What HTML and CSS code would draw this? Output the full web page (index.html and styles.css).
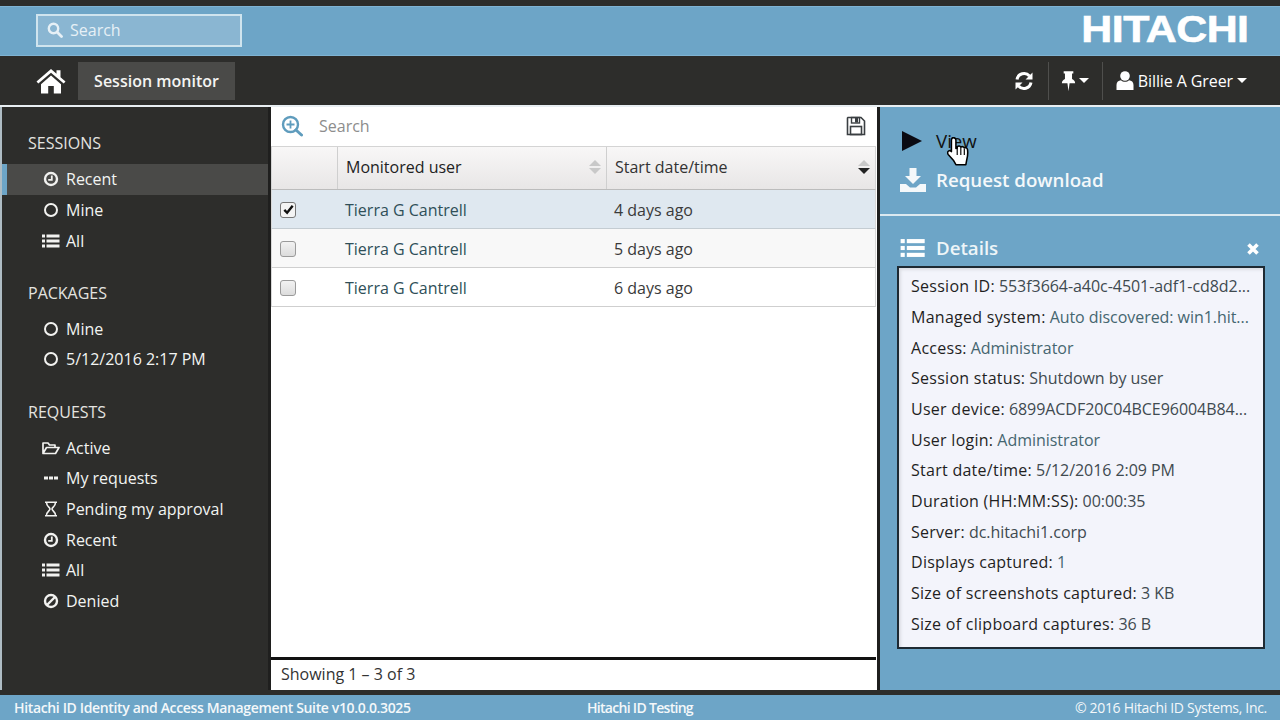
FILE: index.html
```html
<!DOCTYPE html>
<html lang="en">
<head>
<meta charset="utf-8">
<title>Session monitor</title>
<link rel="stylesheet" href="styles.css">
</head>
<body>
<svg class="defs" width="0" height="0" aria-hidden="true">
  <defs>
    <symbol id="i-clock" viewBox="0 0 16 16"><circle cx="8" cy="8" r="6" fill="none" stroke="currentColor" stroke-width="2.4"/><path d="M8.8 4.5v4.3H5.2" fill="none" stroke="currentColor" stroke-width="1.8"/></symbol>
    <symbol id="i-ring" viewBox="0 0 16 16"><circle cx="8" cy="8" r="6" fill="none" stroke="currentColor" stroke-width="2"/></symbol>
    <symbol id="i-list" viewBox="0 0 18 16"><g fill="currentColor"><rect x="0" y="1.5" width="3" height="3"/><rect x="0" y="6.5" width="3" height="3"/><rect x="0" y="11.5" width="3" height="3"/><rect x="4.5" y="1.5" width="13" height="3"/><rect x="4.5" y="6.5" width="13" height="3"/><rect x="4.5" y="11.5" width="13" height="3"/></g></symbol>
    <symbol id="i-folder" viewBox="0 0 18 16"><path d="M1 13.5V3h5l1.5 2H13v2.5M1 13.5h12.5L17 7.5H4.5L1 13.5z" fill="none" stroke="currentColor" stroke-width="1.7" stroke-linejoin="round"/></symbol>
    <symbol id="i-dots" viewBox="0 0 16 16"><g fill="currentColor"><rect x="1" y="6.5" width="4" height="3"/><rect x="6" y="6.5" width="4" height="3"/><rect x="11" y="6.5" width="4" height="3"/></g></symbol>
    <symbol id="i-hour" viewBox="0 0 16 16"><path d="M2 1.2h12M2 14.8h12M3.5 1.5c0 4 3.5 4.8 3.5 6.5S3.500 10.500 3.500 14.500M12.500 1.500c0 4-3.500 4.800-3.500 6.500s3.500 2.500 3.500 6.500" fill="none" stroke="currentColor" stroke-width="1.6"/></symbol>
    <symbol id="i-ban" viewBox="0 0 16 16"><circle cx="8" cy="8" r="6" fill="none" stroke="currentColor" stroke-width="2.4"/><path d="M4 12l8-8" stroke="currentColor" stroke-width="2.4"/></symbol>
  </defs>
</svg>
<div class="page">
  <header class="brand">
    <div class="global-search">
      <svg class="gs-icon" viewBox="0 0 16 16"><circle cx="6.500" cy="6.500" r="4.700" fill="none" stroke="currentColor" stroke-width="2.400"/><path d="M10 10l4.500 4.500" stroke="currentColor" stroke-width="2.800" stroke-linecap="round"/></svg>
      <span>Search</span>
    </div>
    <div class="logo">HITACHI</div>
  </header>
  <nav class="topnav">
    <svg class="home" viewBox="0 0 30 26"><path fill="currentColor" d="M15 1 0.500 13.500 2.300 15.600 15 4.700 27.700 15.600 29.500 13.500 24.500 9.200V2.300H20.500V5.700zM5 16.200V25.500H12.200V18H17.800V25.500H25V16.200L15 7.500z"/></svg>
    <div class="crumb">Session monitor</div>
    <div class="nav-right">
      <svg class="refresh" viewBox="0 0 20 20"><g fill="none" stroke="currentColor" stroke-width="3"><path d="M3 8.500A7.200 7.200 0 0 1 15.500 5"/><path d="M17 11.500A7.200 7.200 0 0 1 4.500 15"/></g><path fill="currentColor" d="M18.500 1.500V8.500H11.500zM1.500 18.500V11.500H8.500z"/></svg>
      <span class="sep"></span>
      <span class="pin-group">
        <svg class="pin" viewBox="0 0 14 20"><path fill="currentColor" d="M2.500 1H11.500V3H10.300V8.200C12 9 13.200 10.300 13.200 12H8L7 19.500 6 12H.800C.800 10.300 2 9 3.700 8.200V3H2.500z"/></svg>
        <span class="caret"></span>
      </span>
      <span class="sep"></span>
      <span class="user">
        <svg class="user-icon" viewBox="0 0 18 20"><circle cx="9" cy="5.500" r="4.800" fill="currentColor"/><path fill="currentColor" d="M.500 19.500V14.500C.500 11.500 2.500 10 5 9.800 6 10.800 7.500 11.300 9 11.300S12 10.800 13 9.800C15.500 10 17.500 11.500 17.500 14.500V19.500z"/></svg>
        <span class="user-name">Billie A Greer</span>
        <span class="caret"></span>
      </span>
    </div>
  </nav>
  <main class="body">
    <aside class="sidebar">
      <h2 class="side-head">SESSIONS</h2>
      <ul class="side-list">
        <li class="active"><svg class="si"><use href="#i-clock"/></svg>Recent</li>
        <li><svg class="si"><use href="#i-ring"/></svg>Mine</li>
        <li><svg class="si"><use href="#i-list"/></svg>All</li>
      </ul>
      <h2 class="side-head">PACKAGES</h2>
      <ul class="side-list">
        <li><svg class="si"><use href="#i-ring"/></svg>Mine</li>
        <li><svg class="si"><use href="#i-ring"/></svg>5/12/2016 2:17 PM</li>
      </ul>
      <h2 class="side-head">REQUESTS</h2>
      <ul class="side-list">
        <li><svg class="si"><use href="#i-folder"/></svg>Active</li>
        <li><svg class="si"><use href="#i-dots"/></svg>My requests</li>
        <li><svg class="si"><use href="#i-hour"/></svg>Pending my approval</li>
        <li><svg class="si"><use href="#i-clock"/></svg>Recent</li>
        <li><svg class="si"><use href="#i-list"/></svg>All</li>
        <li><svg class="si"><use href="#i-ban"/></svg>Denied</li>
      </ul>
    </aside>
    <section class="content">
      <div class="filter">
        <svg class="zoom-icon" viewBox="0 0 22 22"><circle cx="9.500" cy="9.500" r="7.500" fill="none" stroke="currentColor" stroke-width="2.400"/><path d="M15 15l5.500 5" stroke="currentColor" stroke-width="3" stroke-linecap="round"/><path d="M9.500 5.500v8M5.500 9.500h8" stroke="currentColor" stroke-width="1.800"/></svg>
        <span class="filter-text">Search</span>
        <svg class="save-icon" viewBox="0 0 20 20"><path d="M2 1.500H15L18.500 5V18.500H1.500V2z" fill="none" stroke="currentColor" stroke-width="1.600"/><rect x="5.500" y="1.500" width="8" height="5.500" fill="none" stroke="currentColor" stroke-width="1.400"/><rect x="9" y="2" width="3" height="4.500" fill="currentColor"/><rect x="4.500" y="10.500" width="11" height="8" fill="none" stroke="currentColor" stroke-width="1.600"/></svg>
      </div>
      <div class="grid">
        <div class="thead">
          <div class="th th-check"></div>
          <div class="th th-user">Monitored user<span class="sort"><i class="up"></i><i class="down"></i></span></div>
          <div class="th th-date">Start date/time<span class="sort"><i class="up"></i><i class="down on"></i></span></div>
        </div>
        <div class="row selected">
          <div class="cell-check"><span class="box"><svg class="tick" viewBox="0 0 14 14"><path d="M2.500 7.500 5.500 10.500 11.500 3" fill="none" stroke="currentColor" stroke-width="2.600"/></svg></span></div>
          <div class="cell-user">Tierra G Cantrell</div>
          <div class="cell-date">4 days ago</div>
        </div>
        <div class="row alt">
          <div class="cell-check"><span class="box"></span></div>
          <div class="cell-user">Tierra G Cantrell</div>
          <div class="cell-date">5 days ago</div>
        </div>
        <div class="row">
          <div class="cell-check"><span class="box"></span></div>
          <div class="cell-user">Tierra G Cantrell</div>
          <div class="cell-date">6 days ago</div>
        </div>
      </div>
      <div class="pager">Showing 1 – 3 of 3</div>
    </section>
    <aside class="panel">
      <div class="actions">
        <div class="action action-view">
          <svg class="play" viewBox="0 0 20 20"><path fill="currentColor" d="M0 0 20 10 0 20z"/></svg>
          <span>View</span>
        </div>
        <div class="action">
          <svg class="dl" viewBox="0 0 26 24"><path fill="currentColor" d="M9.500 0h7v8H21l-8 8-8-8h4.500zM0 16h6l4 3.500h6l4-3.500h6v8H0z"/></svg>
          <span>Request download</span>
        </div>
      </div>
      <div class="details-head">
        <svg class="details-icon"><use href="#i-list"/></svg>
        <span>Details</span>
        <svg class="close" viewBox="0 0 14 14"><path d="M2.500 2.500l9 9M11.500 2.500l-9 9" stroke="currentColor" stroke-width="3.600"/></svg>
      </div>
      <dl class="details">
        <div><dt>Session ID:</dt> <dd>553f3664-a40c-4501-adf1-cd8d2...</dd></div>
        <div><dt>Managed system:</dt> <dd class="link">Auto discovered: win1.hit...</dd></div>
        <div><dt>Access:</dt> <dd class="link">Administrator</dd></div>
        <div><dt>Session status:</dt> <dd>Shutdown by user</dd></div>
        <div><dt>User device:</dt> <dd>6899ACDF20C04BCE96004B84...</dd></div>
        <div><dt>User login:</dt> <dd class="link">Administrator</dd></div>
        <div><dt>Start date/time:</dt> <dd>5/12/2016 2:09 PM</dd></div>
        <div><dt>Duration (HH:MM:SS):</dt> <dd>00:00:35</dd></div>
        <div><dt>Server:</dt> <dd>dc.hitachi1.corp</dd></div>
        <div><dt>Displays captured:</dt> <dd class="link">1</dd></div>
        <div><dt>Size of screenshots captured:</dt> <dd>3 KB</dd></div>
        <div><dt>Size of clipboard captures:</dt> <dd>36 B</dd></div>
      </dl>
      <svg class="cursor" viewBox="1 1 17 22.500"><path fill="#fff" stroke="#000" stroke-width="1.200" stroke-linejoin="round" d="M5.500 1.500c1.200 0 2 .8 2 2V10l1-.3V8.500c1-.8 2.300-.6 2.800.3 1-.6 2.200-.3 2.700.6 1-.4 2.300.1 2.500 1.300.3 2.500.2 5-.5 7.500l-.8 4.300H7.500L5.500 19 1.500 14.500c-.8-1-.5-2.200.4-2.700 1-.5 1.800 0 2.100.5V3.500c0-1.200.5-2 1.500-2z"/><path d="M8.500 10v5M11.300 9v6M14 10v5" stroke="#000" stroke-width=".9" fill="none"/></svg>
    </aside>
  </main>
  <footer class="foot">
    <span class="foot-left">Hitachi ID Identity and Access Management Suite v10.0.0.3025</span>
    <span class="foot-mid">Hitachi ID Testing</span>
    <span class="foot-right">© 2016 Hitachi ID Systems, Inc.</span>
  </footer>
</div>
</body>
</html>
```
FILE: styles.css
```css
* { box-sizing: border-box; }
html, body { margin: 0; padding: 0; }
body {
  width: 1280px; height: 720px; overflow: hidden;
  font-family: "Open Sans", sans-serif; font-size: 16px;
  background: #2d2d2b; color: #fff;
}
.defs { position: absolute; }
.page { display: flex; flex-direction: column; height: 720px; padding-top: 6px; }

.brand {
  height: 50px; flex: none; background: #6da5c7;
  display: flex; align-items: center; justify-content: space-between;
  padding: 0 31px 2px 36px;
  border-top: 1px solid #7fb3d3; border-bottom: 1px solid #7fb3d3;
}
.global-search {
  width: 206px; height: 33px;
  background: #8ab6d2; border: 2px solid #cfe4ee;
  display: flex; align-items: center; padding-left: 9px; gap: 7px;
  color: #e6f0f6; font-size: 16px;
}
.gs-icon { width: 16px; height: 16px; }
.logo {
  font-family: "Liberation Sans", sans-serif; font-weight: 700;
  font-size: 36px; line-height: 1; letter-spacing: -0.400px; color: #fff;
  transform: scaleX(1.190); transform-origin: right center;
  -webkit-text-stroke: .6px #fff;
}

.topnav {
  height: 49px; flex: none; background: #2d2d2b;
  display: flex; align-items: center; padding-left: 36px;
}
.home { width: 30px; height: 26px; color: #fff; margin-right: 12px; }
.crumb {
  height: 38px; width: 157px; background: #4a4a48;
  display: flex; align-items: center; justify-content: center;
  font-weight: 600; font-size: 16px; color: #f4f4f2;
}
.nav-right { margin-left: auto; display: flex; align-items: center; height: 38px; padding-right: 33px; }
.refresh { width: 20px; height: 20px; margin-right: 14px; color: #fff; }
.sep { width: 1px; height: 38px; background: #4f4f4d; }
.pin-group { display: flex; align-items: center; gap: 3px; margin: 0 13px 0 12px; }
.pin { width: 15px; height: 22px; color: #fff; }
.caret { width: 0; height: 0; border-left: 5px solid transparent; border-right: 5px solid transparent; border-top: 5px solid #fff; }
.user { display: flex; align-items: center; margin-left: 13px; gap: 4px; }
.user-icon { width: 18px; height: 21px; color: #fff; }
.user-name { font-size: 16px; margin-right: 0; letter-spacing: -.1px; }

.body {
  height: 585px; flex: none; display: flex;
  border-top: 2px solid #e8eef2; background: #2d2d2b;
  margin-bottom: 5px;
}
.sidebar {
  width: 271px; flex: none; background: #2d2d2b;
  border-left: 2px solid #aebcc4; border-right: 3px solid #1f1f1e;
  padding-top: 19.500px;
}
.side-head {
  margin: 0; padding-left: 26px; font-size: 16px; font-weight: 400; line-height: 34px; height: 37.500px;
  color: #e4e4e0;
}
.side-head:first-child { line-height: 33px; }
.side-list { list-style: none; margin: 0 0 20px; padding: 0; }
.side-list li {
  height: 30.670px; display: flex; align-items: center; padding-left: 40px; gap: 6px;
  font-size: 16px; color: #f2f4f2;
}
.side-list li.active { background: #4a4a48; border-left: 5px solid #6da5c7; padding-left: 35px; }
.si { width: 18px; height: 16px; flex: none; color: #f2f2f0; }

.content {
  width: 606px; flex: none; background: #fff; display: flex; flex-direction: column;
  color: #333;
}
.filter { height: 39.300px; flex: none; display: flex; align-items: center; padding: 0 11px 2px 10px; color: #888; }
.zoom-icon { width: 22px; height: 22px; color: #5f9cbd; }
.filter-text { margin-left: 16px; font-size: 16px; color: #8d8d8d; }
.save-icon { width: 20px; height: 20px; margin-left: auto; color: #3a3f42; }
.grid { flex: 1; margin-right: 1px; }
.thead {
  display: flex; height: 44px;
  background: linear-gradient(#f8f7f7, #e8e6e6);
  border: 1px solid #d4d4d4; border-bottom: 1px solid #bcbcbc;
}
.th { display: flex; align-items: center; border-right: 1px solid #cfcfcf; font-size: 16px; color: #222; position: relative; padding-bottom: 2px; }
.th-check { width: 66px; }
.th-user { width: 269px; padding-left: 8px; }
.th-date { flex: 1; padding-left: 8px; border-right: 0; color: #333; }
.sort { position: absolute; right: 5px; top: 13px; display: flex; flex-direction: column; gap: 2px; }
.sort i { display: block; width: 0; height: 0; border-left: 6px solid transparent; border-right: 6px solid transparent; }
.sort .up { border-bottom: 6px solid #c8c8c8; }
.sort .down { border-top: 6px solid #c8c8c8; }
.sort .down.on { border-top-color: #222; }
.row {
  display: flex; align-items: center; height: 39px; padding-top: 1px;
  border-bottom: 1px solid #cfcfcf; border-left: 1px solid #d8d8d8; border-right: 1px solid #d8d8d8;
  color: #333; font-size: 16px;
}
.row.selected { background: #dfe8f0; border-bottom-color: #c4ccd2; }
.row.alt { background: #f8f8f8; }
.cell-check { width: 66px; padding-left: 8px; display: flex; align-items: center; }
.box {
  width: 16px; height: 16px; border: 1px solid #9a9a9a; border-radius: 3px;
  background: linear-gradient(#f2f2f2, #dcdcdc); display: flex; align-items: center; justify-content: center;
  color: #111;
}
.selected .box { background: #f4f4f4; border-color: #777; }
.tick { width: 13px; height: 13px; }
.cell-user { width: 268px; padding-left: 7px; color: #2f4f58; }
.cell-date { flex: 1; padding-left: 8px; color: #3a3a3a; }
.pager {
  height: 33px; flex: none; border-top: 3px solid #111; margin-right: 1px;
  display: flex; align-items: center; padding: 0 0 2px 10px; font-size: 16px; color: #333;
}

.panel { flex: 1; min-width: 0; background: #6da5c7; border-left: 3px solid #1f1f1e; position: relative; color: #fff; }
.actions { height: 109px; border-bottom: 2px solid #dbe9f0; padding: 14px 0 0 20px; }
.action { display: flex; align-items: center; height: 39px; font-size: 18.700px; font-weight: 600; color: #f4f8fa; }
.action-view { color: #111; font-weight: 400; }
.play { width: 20px; height: 22px; margin-right: 14px; color: #0a0a12; margin-left: 2px; }
.dl { width: 26px; height: 24px; margin-right: 10px; }
.details-head {
  display: flex; align-items: center; height: 35px; margin-top: 14px; padding: 0 20px 0 20px;
  font-size: 18.700px; font-weight: 600; color: #eef5f8;
}
.details-icon { width: 26px; height: 22px; margin-right: 10px; color: #fff; }
.close { width: 14px; height: 14px; margin-left: auto; color: #fff; margin-top: 2px; }
.details {
  margin: 1px 0 0 17px; width: 368px; height: 383px;
  background: #f3f4fb; border: 2px solid #1e2a33; padding: 3px 14px 0 12px;
  box-shadow: inset 4px 4px 3px -2px #dcdee4;
}
.details div { height: 30.670px; display: flex; align-items: center; gap: 4px; font-size: 16px; white-space: nowrap; }
.details dt { color: #1f1f1f; letter-spacing: .27px; }
.details dd { margin: 0; color: #3f4a50; letter-spacing: -.05px; }
.details dd.link { color: #456670; }
.cursor { position: absolute; left: 67px; top: 30px; width: 23px; height: 29px; }

.foot {
  height: 25px; flex: none; background: #6da5c7; display: flex; align-items: center; position: relative;
  padding: 0 13px 0 14px; font-size: 14px; color: #f4f8fa; font-weight: 600;
}
.foot-left { letter-spacing: -.35px; }
.foot-mid { position: absolute; left: 587px; letter-spacing: -.7px; }
.foot-right { margin-left: auto; letter-spacing: -.31px; font-weight: 400; }
```
